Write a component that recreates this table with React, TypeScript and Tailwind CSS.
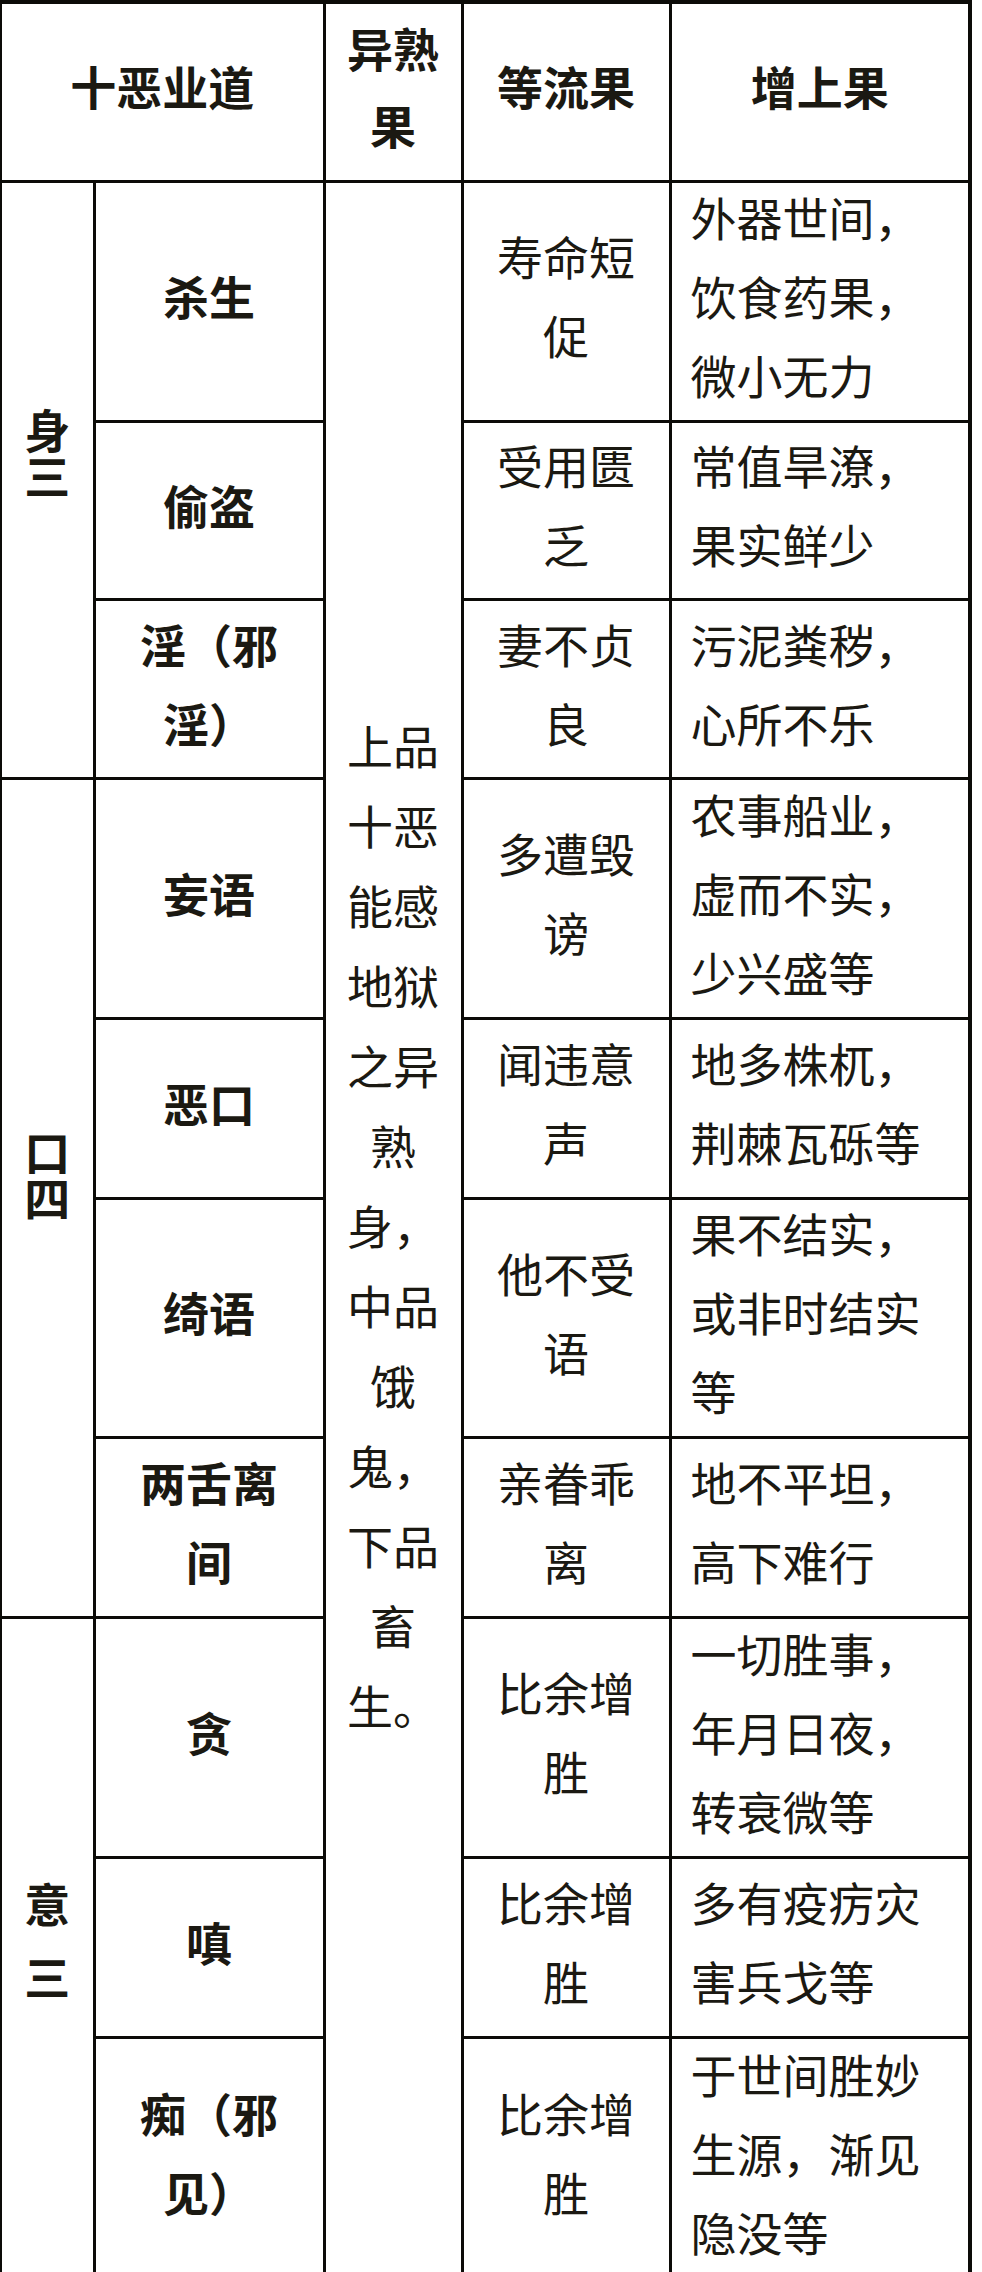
import React from "react";

// 十恶业道 results table
type Row = {
    act: string[];
    h: string;
    flow: string[];
    gain: string[];
};

type Group = { start: number; span: number; label: string[]; cls: string };

const rows: Row[] = [
    { act: ["杀生"], h: "h-[240px]", flow: ["寿命短", "促"], gain: ["外器世间，", "饮食药果，", "微小无力"] },
    { act: ["偷盗"], h: "h-[178px]", flow: ["受用匮", "乏"], gain: ["常值旱潦，", "果实鲜少"] },
    { act: ["淫（邪", "淫）"], h: "h-[179px]", flow: ["妻不贞", "良"], gain: ["污泥粪秽，", "心所不乐"] },
    { act: ["妄语"], h: "h-[240px]", flow: ["多遭毁", "谤"], gain: ["农事船业，", "虚而不实，", "少兴盛等"] },
    { act: ["恶口"], h: "h-[180px]", flow: ["闻违意", "声"], gain: ["地多株杌，", "荆棘瓦砾等"] },
    { act: ["绮语"], h: "h-[239px]", flow: ["他不受", "语"], gain: ["果不结实，", "或非时结实", "等"] },
    { act: ["两舌离", "间"], h: "h-[180px]", flow: ["亲眷乖", "离"], gain: ["地不平坦，", "高下难行"] },
    { act: ["贪"], h: "h-[240px]", flow: ["比余增", "胜"], gain: ["一切胜事，", "年月日夜，", "转衰微等"] },
    { act: ["嗔"], h: "h-[180px]", flow: ["比余增", "胜"], gain: ["多有疫疠灾", "害兵戈等"] },
    { act: ["痴（邪", "见）"], h: "h-[242px]", flow: ["比余增", "胜"], gain: ["于世间胜妙", "生源，渐见", "隐没等"] },
];

// the 身/口/意 labels sit a little above the middle of their span
const groups: Group[] = [
    { start: 0, span: 3, label: ["身", "三"], cls: "leading-[46px] pb-[57px]" },
    { start: 3, span: 4, label: ["口", "四"], cls: "leading-[46px] pb-[50px]" },
    { start: 7, span: 3, label: ["意", "三"], cls: "leading-[73px] pb-[19px]" },
];

const ripening = ["上品", "十恶", "能感", "地狱", "之异", "熟", "身，", "中品", "饿", "鬼，", "下品", "畜", "生。"];

const cell = "border-[3px] border-[#0c0b08] align-middle";

// negative top margin nudges the text block up without growing the row
function Lines({ lines, lift = true }: { lines: string[]; lift?: boolean }) {
    return (
        <div className={lift ? "-mt-[12px]" : ""}>
            {lines.map((l, i) => (
                <div key={i}>{l}</div>
            ))}
        </div>
    );
}

export default function App() {
    return (
        <div className="h-[2272px] overflow-hidden bg-white font-['Noto_Sans_CJK_SC',sans-serif] text-[#1b1912]">
            <table className="w-[969px] table-fixed border-collapse text-[46px] leading-[79px]">
                <colgroup>
                    <col className="w-[93px]" />
                    <col className="w-[230px]" />
                    <col className="w-[138px]" />
                    <col className="w-[208px]" />
                    <col className="w-[300px]" />
                </colgroup>
                <thead>
                    <tr className="h-[179px]">
                        <th colSpan={2} className={`${cell} border-t-4 border-l-2 text-center font-bold`}>
                            <Lines lines={["十恶业道"]} />
                        </th>
                        <th className={`${cell} border-t-4 text-center font-bold leading-[77px]`}>
                            <Lines lines={["异熟", "果"]} />
                        </th>
                        <th className={`${cell} border-t-4 text-center font-bold`}>
                            <Lines lines={["等流果"]} />
                        </th>
                        <th className={`${cell} border-t-4 border-r-4 text-center font-bold`}>
                            <Lines lines={["增上果"]} />
                        </th>
                    </tr>
                </thead>
                <tbody>
                    {rows.map((row, i) => {
                        const group = groups.find((g) => g.start === i);
                        return (
                            <tr key={i} className={row.h}>
                                {group && (
                                    <td rowSpan={group.span} className={`${cell} border-l-2 text-center font-bold ${group.cls}`}>
                                        <Lines lines={group.label} lift={false} />
                                    </td>
                                )}
                                <td className={`${cell} text-center font-bold`}>
                                    <Lines lines={row.act} />
                                </td>
                                {i === 0 && (
                                    <td rowSpan={rows.length} className={`${cell} text-center leading-[80px]`}>
                                        <Lines lines={ripening} />
                                    </td>
                                )}
                                <td className={`${cell} text-center`}>
                                    <Lines lines={row.flow} />
                                </td>
                                <td className={`${cell} border-r-4 pl-[19px] text-left`}>
                                    <Lines lines={row.gain} />
                                </td>
                            </tr>
                        );
                    })}
                </tbody>
            </table>
        </div>
    );
}
